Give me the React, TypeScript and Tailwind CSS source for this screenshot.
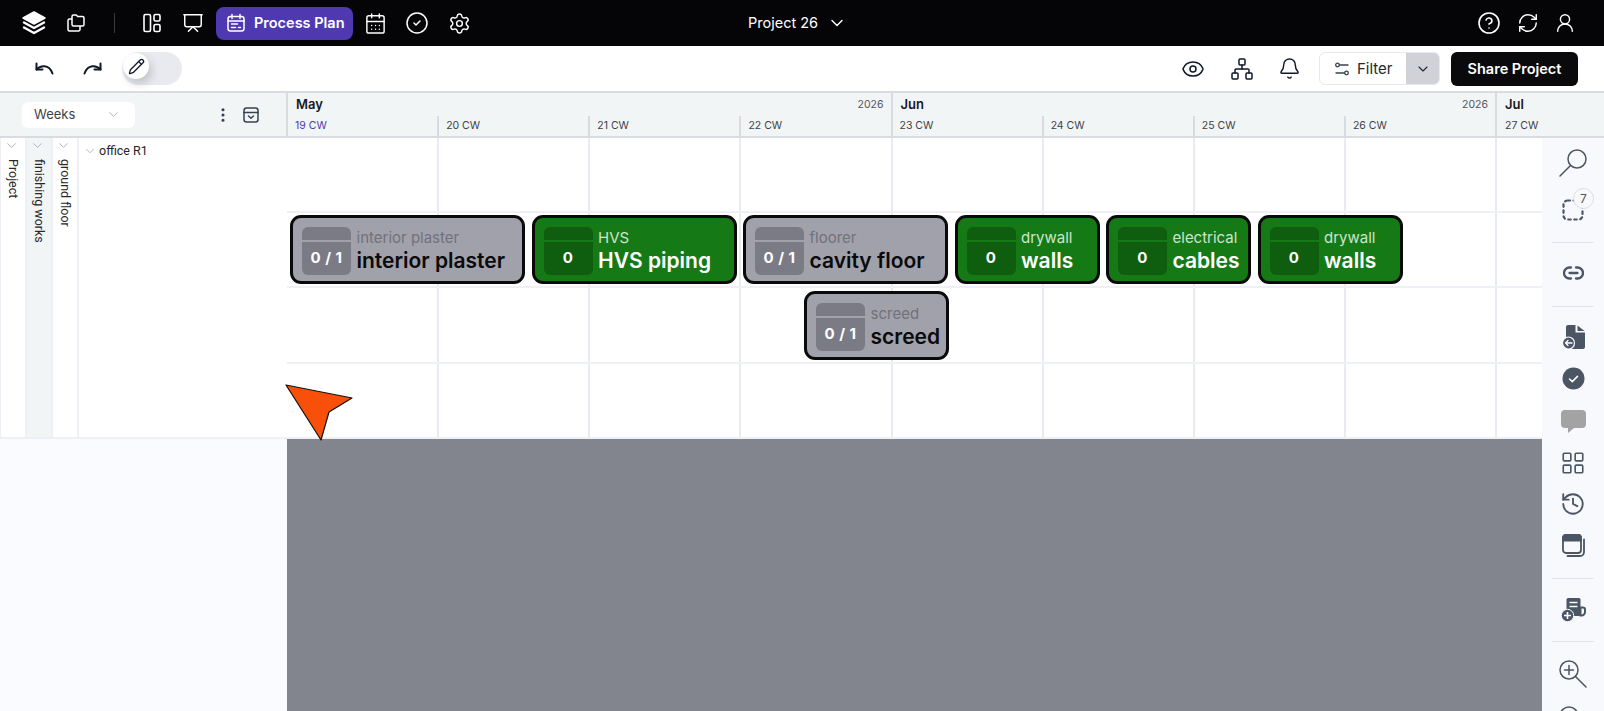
import React from "react";
import { LayoutGrid, History, Presentation, CalendarDays, CircleCheck, Settings, CircleHelp, RefreshCw, UserRound, Eye, Network, Bell, ChevronDown, Pencil, EllipsisVertical } from "lucide-react";

const Logo = () => (
  <svg width="26" height="26" viewBox="0 0 26 26" fill="#fff">
    <path d="M13 2 L24 8 L13 14 L2 8 Z" stroke="#fff" strokeWidth="1.5" strokeLinejoin="round" />
    <path d="M3 12.5 L13 18 L23 12.5" fill="none" stroke="#fff" strokeWidth="2.4" strokeLinejoin="round" strokeLinecap="round" />
    <path d="M3 17.5 L13 23 L23 17.5" fill="none" stroke="#fff" strokeWidth="2.4" strokeLinejoin="round" strokeLinecap="round" />
  </svg>
);
const CopyFolder = () => (
  <svg width="20" height="20" viewBox="0 0 20 20" fill="none" stroke="#fff" strokeWidth="1.5" strokeLinejoin="round">
    <path d="M6 3.5a1.5 1.5 0 0 1 1.5-1.5h2.7l1.5 1.6h4.8a1.5 1.5 0 0 1 1.5 1.5v6.4a1.5 1.5 0 0 1-1.5 1.5h-9A1.5 1.5 0 0 1 6 11.5Z" />
    <path d="M6 6H3.5A1.5 1.5 0 0 0 2 7.5v9A1.5 1.5 0 0 0 3.5 18h9a1.5 1.5 0 0 0 1.5-1.5V13" />
  </svg>
);
const Panels = () => (
  <svg width="20" height="20" viewBox="0 0 20 20" fill="none" stroke="#fff" strokeWidth="1.6">
    <rect x="2" y="1.500" width="6.500" height="17" rx="1.500" />
    <rect x="12" y="1.500" width="6" height="6.500" rx="1.500" />
    <rect x="12" y="11.500" width="6" height="7" rx="1.500" />
  </svg>
);
const PlanIcon = () => (
  <svg width="20" height="20" viewBox="0 0 20 20" fill="none" stroke="#fff" strokeWidth="1.5" strokeLinecap="round">
    <rect x="2" y="3.500" width="16" height="14.500" rx="2.500" />
    <path d="M2 8h16M6 1.500v4M14 1.500v4M5.500 11h6M12.500 14.500h2M5.500 14.500h4" />
  </svg>
);
const FilterIcon = () => (
  <svg width="16" height="16" viewBox="0 0 16 16" fill="none" stroke="#374151" strokeWidth="1.3" strokeLinecap="round">
    <circle cx="3.500" cy="4" r="1.800" />
    <path d="M5.500 4H14M2 12h8.500" />
    <circle cx="12.500" cy="12" r="1.800" />
  </svg>
);
const ArchiveDown = () => (
  <svg width="18" height="18" viewBox="0 0 18 18" fill="none" stroke="#374151" strokeWidth="1.5" strokeLinecap="round" strokeLinejoin="round">
    <rect x="2" y="2" width="14" height="14" rx="2.500" />
    <path d="M2 6.500h14M6.500 10l2.500 2.300 2.500-2.300" />
  </svg>
);
const UndoIcon = ({ flip }: { flip?: boolean }) => (
  <svg width="19" height="13" viewBox="0 0 19 13" fill="none" stroke="#111827" strokeWidth="2" strokeLinecap="round" strokeLinejoin="round" className={flip ? "-scale-x-100" : ""}>
    <path d="M1.500 1.500v6h6" />
    <path d="M1.500 7.500C5 3.500 14 1.500 17.500 11.500" />
  </svg>
);
const SearchIcon = () => (
  <svg width="28" height="28" viewBox="0 0 28 28" fill="none" stroke="#4b5563" strokeWidth="1.500" strokeLinecap="round">
    <circle cx="18" cy="10" r="9" />
    <path d="M11.500 16.500L1 27" />
  </svg>
);
const ZoomGlass = ({ plus }: { plus?: boolean }) => (
  <svg width="28" height="28" viewBox="0 0 28 28" fill="none" stroke="#4b5563" strokeWidth="1.500" strokeLinecap="round">
    <circle cx="10" cy="10" r="9" />
    <path d="M16.500 16.500L27 27M5.500 10h9" />
    {plus && <path d="M10 5.500v9" />}
  </svg>
);
const LinkIcon = () => (
  <svg width="21" height="14" viewBox="0 0 21 14" fill="none" stroke="#4b5563" strokeWidth="2.300" strokeLinecap="round">
    <path d="M8 1.500H6.500a5.500 5.500 0 0 0 0 11H8" />
    <path d="M13 1.500h1.500a5.500 5.500 0 0 1 0 11H13" />
    <path d="M6.500 7h8" />
  </svg>
);
const DashedBox = () => (
  <svg width="22" height="22" viewBox="0 0 22 22" fill="none" stroke="#4b5563" strokeWidth="2.200" strokeLinecap="round">
    <rect x="1.500" y="1.500" width="19" height="19" rx="4" strokeDasharray="2.500 3.500" />
  </svg>
);
const FileBack = () => (
  <svg width="23" height="25" viewBox="0 0 23 25">
    <path d="M4 2a2 2 0 0 1 2-2h7.500v7.500H23V22a2 2 0 0 1-2 2H6a2 2 0 0 1-2-2Z" fill="#4b5563" />
    <path d="M15.500 0.500L22.500 6h-7Z" fill="#4b5563" />
    <circle cx="6.500" cy="18" r="6" fill="#4b5563" stroke="#f8f9fd" strokeWidth="1.200" />
    <path d="M10 18H3.500M6 15.500L3.500 18 6 20.500" fill="none" stroke="#fff" strokeWidth="1.300" strokeLinecap="round" strokeLinejoin="round" />
  </svg>
);
const FilledCheck = () => (
  <svg width="23" height="23" viewBox="0 0 23 23">
    <circle cx="11.500" cy="11.500" r="11" fill="#4b5563" />
    <path d="M7.500 12l2.800 2.600 5.200-5.200" fill="none" stroke="#fff" strokeWidth="1.500" strokeLinecap="round" strokeLinejoin="round" />
  </svg>
);
const Comment = () => (
  <svg width="25" height="23" viewBox="0 0 25 23">
    <path d="M4 0h17a4 4 0 0 1 4 4v10a4 4 0 0 1-4 4h-8l-6 5 0-5H4a4 4 0 0 1-4-4V4a4 4 0 0 1 4-4Z" fill="#a3a3a3" />
  </svg>
);
const Windows = () => (
  <svg width="23" height="23" viewBox="0 0 23 23" fill="none" stroke="#4b5563" strokeWidth="1.800">
    <rect x="1" y="1" width="18" height="18" rx="3" />
    <path d="M1 4a3 3 0 0 1 3-3h12a3 3 0 0 1 3 3v2.500H1Z" fill="#4b5563" />
    <path d="M22 5.500V18a4 4 0 0 1-4 4H5.500" strokeLinecap="round" />
  </svg>
);
const BookPlus = () => (
  <svg width="25" height="24" viewBox="0 0 25 24">
    <rect x="5.500" y="0" width="14" height="18" rx="1.500" fill="#4b5563" />
    <path d="M8.500 4.500h8M8.500 8.500h8" stroke="#f8f9fd" strokeWidth="1.400" />
    <path d="M19.500 9.500h2.500a2 2 0 0 1 2 2V14a3.500 3.500 0 0 1-3.500 3.500h-1Z" fill="none" stroke="#4b5563" strokeWidth="2" />
    <circle cx="6.500" cy="17.500" r="6.200" fill="#4b5563" stroke="#f8f9fd" strokeWidth="1" />
    <path d="M6.500 14v7M3 17.500h7" stroke="#fff" strokeWidth="1.600" />
  </svg>
);

const weeks = ["19 CW", "20 CW", "21 CW", "22 CW", "23 CW", "24 CW", "25 CW", "26 CW"];

type CardProps = { sub: string; title: string; count: string; green?: boolean; width: string };
const Card = ({ sub, title, count, green, width }: CardProps) => (
  <div className={`${width} h-[69px] shrink-0 rounded-[11px] border-[3px] border-[#0a0a0a] flex items-center pl-[9px] pt-[2px] gap-[5.500px] ${green ? "bg-[#157a16]" : "bg-[#a1a1ab]"}`}>
    <div className="w-[49px] h-[48px] shrink-0 flex flex-col gap-[2px]">
      <div className={`h-[13px] rounded-t-[6px] ${green ? "bg-[#0f5e10]" : "bg-[#7b7b86]"}`} />
      <div className={`flex-1 rounded-b-[6px] flex items-center justify-center text-white text-[15px] tracking-[0.5px] font-bold ${green ? "bg-[#0f5e10]" : "bg-[#7b7b86]"}`}>{count}</div>
    </div>
    <div className="flex flex-col whitespace-nowrap mt-[1.500px]">
      <span className={`text-[15px] leading-[18px] ${green ? "text-[#cfe3cf]" : "text-[#71717a]"}`}>{sub}</span>
      <span className={`text-[21px] leading-[27px] font-semibold ${green ? "text-white" : "text-[#0a0a0a]"}`}>{title}</span>
    </div>
  </div>
);

const Sep = ({ cls }: { cls: string }) => <div className={`w-[42px] h-px bg-[#e2e4ec] shrink-0 ${cls}`} />;

const GridRow = ({ h }: { h: string }) => (
  <div className={`flex ${h} border-b-2 border-[#eef0f6]`}>
    {weeks.map((w, i) => (
      <div key={w} className={`${i === 0 ? "w-[152.125px]" : "w-[151.125px]"} shrink-0 border-r-2 border-[#e9ebf3]`} />
    ))}
    <div className="flex-1" />
  </div>
);

const VCol = ({ label, bg }: { label: string; bg: string }) => (
  <div className={`w-[26px] shrink-0 border-r-2 border-[#eef0f6] flex flex-col items-center ${bg}`}>
    <ChevronDown size={15} strokeWidth={1.300} className="text-[#9ca3af] -ml-[3px]" />
    <span className="[writing-mode:vertical-rl] text-[12.500px] leading-[14px] text-[#27272a] mt-[6px] whitespace-nowrap" style={{ fontFamily: "Roboto, sans-serif" }}>{label}</span>
  </div>
);

export default function App() {
  return (
    <div className="w-[1604px] h-[711px] overflow-hidden flex flex-col bg-white font-['Inter',sans-serif]">
      {/* top bar */}
      <div className="h-[46px] shrink-0 bg-[#050507] flex items-center relative">
        <div className="flex items-center pl-[21px]">
          <Logo />
          <div className="ml-[19px]"><CopyFolder /></div>
          <div className="w-px h-[20px] bg-[#3a3a3e] ml-[28px]" />
          <div className="ml-[27px]"><Panels /></div>
          <Presentation size={22} strokeWidth={1.600} className="text-white ml-[20px]" />
          <div className="ml-[12px] w-[137px] h-[33px] rounded-lg bg-[#4f39b0] flex items-center pl-[10px] gap-[8px]">
            <PlanIcon />
            <span className="text-white text-[14.500px] font-semibold">Process Plan</span>
          </div>
          <CalendarDays size={23} strokeWidth={1.500} className="text-white ml-[11px]" />
          <CircleCheck size={24} strokeWidth={1.500} className="text-white ml-[18px]" />
          <Settings size={23} strokeWidth={1.500} className="text-white ml-[19px]" />
        </div>
        <div className="absolute left-[748px] top-0 h-full flex items-center gap-[9px] text-white text-[14.500px]">
          <span>Project 26</span>
          <ChevronDown size={20} strokeWidth={1.700} />
        </div>
        <div className="ml-auto flex items-center gap-[15.500px] pr-[28px]">
          <CircleHelp size={24} strokeWidth={1.600} className="text-white" />
          <RefreshCw size={22} strokeWidth={1.600} className="text-white" />
          <UserRound size={22} strokeWidth={1.600} className="text-white" />
        </div>
      </div>

      {/* toolbar */}
      <div className="h-[45px] shrink-0 bg-white flex items-center">
        <div className="ml-[35px]"><UndoIcon /></div>
        <div className="ml-[29px]"><UndoIcon flip /></div>
        <div className="ml-[20px] w-[60px] h-[33px] rounded-full bg-[#e9eaf0] flex items-start pt-[1px] pl-[1px]">
          <div className="w-[26px] h-[26px] rounded-full bg-white flex items-center justify-center shadow-[3px_5px_9px_rgba(0,0,0,0.16)]">
            <Pencil size={17} strokeWidth={1.800} className="text-[#111827]" />
          </div>
        </div>
        <div className="ml-auto flex items-center pr-[26px]">
          <Eye size={24} strokeWidth={1.500} className="text-[#111827]" />
          <Network size={24} strokeWidth={1.500} className="text-[#111827] ml-[25px]" />
          <Bell size={23} strokeWidth={1.500} className="text-[#111827] ml-[24px]" />
          <div className="ml-[18px] w-[121px] h-[33px] rounded-md border border-[#e8e9ef] flex overflow-hidden">
            <div className="w-[86px] flex items-center pl-[14px] gap-[7px] text-[15px] text-[#27272a]">
              <FilterIcon /><span className="mt-[1px]">Filter</span>
            </div>
            <div className="flex-1 bg-[#d1d2d8] flex items-center justify-center">
              <ChevronDown size={16} strokeWidth={1.700} className="text-[#1f2937]" />
            </div>
          </div>
          <div className="ml-[11px] w-[127px] h-[34px] rounded-md bg-[#0a0a0c] text-white text-[14.500px] font-semibold flex items-center justify-center">Share Project</div>
        </div>
      </div>

      {/* header */}
      <div className="h-[47px] shrink-0 bg-[#f2f5f6] border-y-2 border-[#d8dbe0] flex">
        <div className="w-[288px] shrink-0 border-r-2 border-[#d8dbe0] flex items-center pl-[22px]">
          <div className="w-[113px] h-[26px] rounded-md bg-white flex items-center justify-between pl-[12px] pr-[14px] text-[13px] text-[#3f3f46]">
            <span>Weeks</span>
            <ChevronDown size={15} strokeWidth={1.300} className="text-[#9ca3af]" />
          </div>
          <EllipsisVertical size={18} strokeWidth={2.200} className="text-[#374151] ml-[79px]" />
          <div className="ml-[10px]"><ArchiveDown /></div>
        </div>
        <div className="flex-1 flex flex-col min-w-0">
          <div className="flex h-[23px]">
            <div className="w-[604.500px] shrink-0 border-r-2 border-[#d8dbe0] flex items-center justify-between pl-[8px] pr-[7px]">
              <span className="text-[13px] font-semibold text-[#18181b]">May</span>
              <span className="text-[10.500px] text-[#52525b]">2026</span>
            </div>
            <div className="w-[604.500px] shrink-0 border-r-2 border-[#d8dbe0] flex items-center justify-between pl-[8px] pr-[7px]">
              <span className="text-[13px] font-semibold text-[#18181b]">Jun</span>
              <span className="text-[10.500px] text-[#52525b]">2026</span>
            </div>
            <div className="flex-1 flex items-center pl-[8px]">
              <span className="text-[13px] font-semibold text-[#18181b]">Jul</span>
            </div>
          </div>
          <div className="flex flex-1">
            {weeks.map((w, i) => (
              <div key={w} className={`w-[151.125px] shrink-0 border-r-2 border-[#d8dbe0] flex items-center pl-[7px] text-[10.500px] ${i === 0 ? "text-[#4f39b0]" : "text-[#3f3f46]"}`}>{w}</div>
            ))}
            <div className="flex-1 flex items-center pl-[8px] text-[10.500px] text-[#3f3f46]">27 CW</div>
          </div>
        </div>
      </div>

      {/* body */}
      <div className="flex-1 flex min-h-0">
        <div className="w-[287px] shrink-0 flex flex-col">
          <div className="h-[301px] flex border-b-2 border-[#eef0f6] bg-white border-l">
            <VCol label="Project" bg="bg-white" />
            <VCol label="finishing works" bg="bg-[#f2f5f6]" />
            <VCol label="ground floor" bg="bg-white" />
            <div className="flex items-start pl-[4px] pt-[5px] gap-[2px] text-[12.500px] leading-[15px] text-[#27272a]" style={{ fontFamily: "Roboto, sans-serif" }}>
              <ChevronDown size={14} strokeWidth={1.300} className="text-[#9ca3af] mt-[1px]" />
              <span>office R1</span>
            </div>
          </div>
          <div className="flex-1 bg-[#fafbff]" />
        </div>

        <div className="flex-1 flex flex-col min-w-0 relative">
          <div className="h-[301px] flex flex-col relative">
            <GridRow h="h-[75px]" />
            <GridRow h="h-[75px]" />
            <GridRow h="h-[76px]" />
            <GridRow h="h-[75px]" />
            <div className="absolute left-[3px] top-[77px] flex gap-[6.500px]">
              <Card sub="interior plaster" title="interior plaster" count="0 / 1" width="w-[235px]" />
              <Card sub="HVS" title="HVS piping" count="0" green width="w-[205px]" />
              <Card sub="floorer" title="cavity floor" count="0 / 1" width="w-[205px]" />
              <Card sub="drywall" title="walls" count="0" green width="w-[145px]" />
              <Card sub="electrical" title="cables" count="0" green width="w-[145px]" />
              <Card sub="drywall" title="walls" count="0" green width="w-[145px]" />
            </div>
            <div className="absolute left-[517px] top-[153px]">
              <Card sub="screed" title="screed" count="0 / 1" width="w-[145px]" />
            </div>
          </div>
          <div className="flex-1 bg-[#82858d]" />
          <svg className="absolute left-[-2px] top-[246px]" width="70" height="58" viewBox="0 0 70 58">
            <path d="M1 1 L67 14 L44 28 L36 56 Z" fill="#f8500a" stroke="#111" strokeWidth="1.200" strokeLinejoin="round" />
          </svg>
        </div>

        <div className="w-[62px] shrink-0 bg-[#f8f9fd] flex flex-col items-center">
          <div className="mt-[11px] h-[28px] shrink-0"><SearchIcon /></div>
          <div className="relative mt-[22px] shrink-0 h-[22px]">
            <DashedBox />
            <div className="absolute left-[11px] top-[-11px] w-[21px] h-[21px] rounded-full border border-[#dcdde3] bg-[#f8f9fd] text-[12px] text-[#52525b] flex items-center justify-center">7</div>
          </div>
          <Sep cls="mt-[21px]" />
          <div className="mt-[23px] h-[14px] shrink-0"><LinkIcon /></div>
          <Sep cls="mt-[26px]" />
          <div className="mt-[18px] shrink-0 h-[25px]"><FileBack /></div>
          <div className="mt-[17px] shrink-0 h-[23px]"><FilledCheck /></div>
          <div className="mt-[20px] shrink-0 h-[23px]"><Comment /></div>
          <LayoutGrid size={26} strokeWidth={1.500} className="text-[#4b5563] mt-[17px] shrink-0" />
          <History size={26} strokeWidth={1.700} className="text-[#4b5563] mt-[15px] shrink-0" />
          <div className="mt-[17px] shrink-0 h-[23px]"><Windows /></div>
          <Sep cls="mt-[21px]" />
          <div className="mt-[19px] shrink-0 h-[24px]"><BookPlus /></div>
          <Sep cls="mt-[19px]" />
          <div className="mt-[18px] shrink-0 h-[28px]"><ZoomGlass plus /></div>
          <div className="mt-[18px] shrink-0 h-[28px]"><ZoomGlass /></div>
        </div>
      </div>
    </div>
  );
}
